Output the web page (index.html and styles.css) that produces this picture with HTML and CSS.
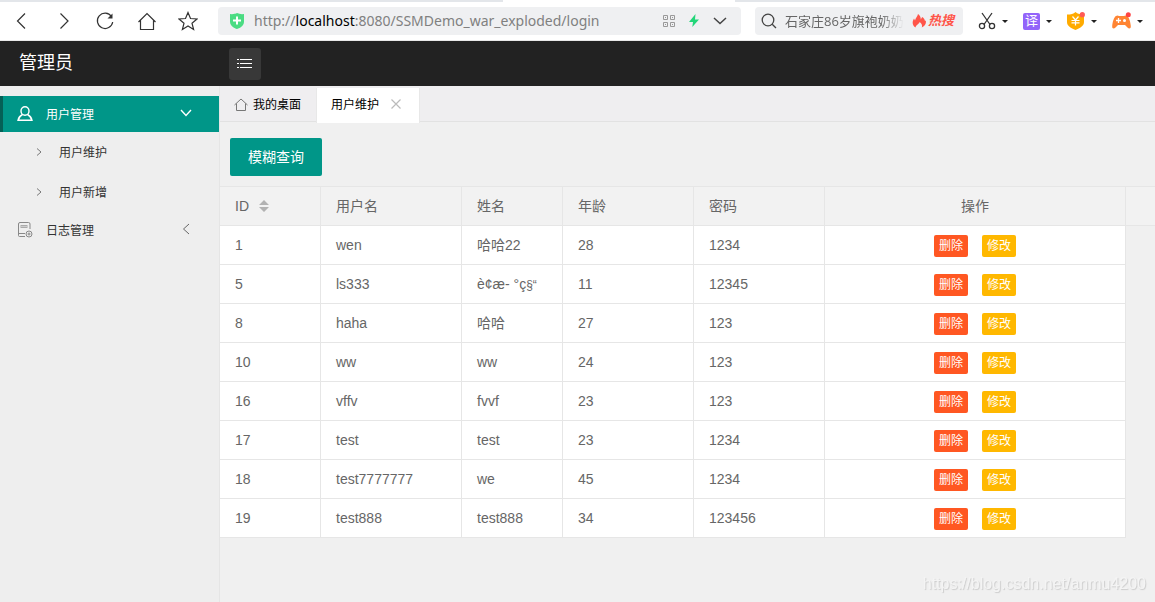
FILE: index.html
```html
<!DOCTYPE html>
<html lang="zh-CN">
<head>
<meta charset="utf-8">
<title>用户维护</title>
<meta name="viewport" content="width=device-width, initial-scale=1">
<link rel="stylesheet" href="styles.css">
</head>
<body>
<div class="strip"><span class="strip-tab"></span><span class="strip-gap"></span><span class="strip-rest"></span></div>
<div class="toolbar">
  <div class="nav">
    <button class="tool" aria-label="后退"><svg width="20" height="20" viewBox="0 0 20 20"><path d="M13 2.500 5.500 10l7.500 7.500"/></svg></button>
    <button class="tool" aria-label="前进"><svg width="20" height="20" viewBox="0 0 20 20"><path d="M6.500 2.500 14 10l-7.500 7.500"/></svg></button>
    <button class="tool" aria-label="刷新"><svg width="20" height="20" viewBox="0 0 20 20"><path d="M16.500 5.500A7.700 7.700 0 1 0 17.700 11"/><path d="M17.500 2.500v5h-5z" fill="#333" stroke="none"/></svg></button>
    <button class="tool" aria-label="主页"><svg width="20" height="20" viewBox="0 0 20 20"><path d="M1.500 11 10 2.500l8.500 8.500M3.500 9.500v9h13v-9"/></svg></button>
    <button class="tool" aria-label="收藏"><svg width="20" height="20" viewBox="0 0 20 20"><path d="m10 1.500 2.500 6 6.500.500-5 4.200 1.600 6.300L10 15l-5.600 3.500L6 12.200 1 8l6.500-.500z"/></svg></button>
  </div>
  <div class="address">
    <svg class="shield" width="14" height="16" viewBox="0 0 14 16"><path d="M0 1q4 .5 7-1 3 1.500 7 1v8q0 4.500-7 7-7-2.500-7-7z" fill="#4bdc83"/><path d="M7 3.500v8M3 7.500h8" stroke="#fff" stroke-width="2"/></svg>
    <div class="url" role="textbox" contenteditable="true" spellcheck="false" aria-label="地址">http://<span class="host">localhost</span>:8080/SSMDemo_war_exploded/login</div>
    <button class="mini" aria-label="二维码"><svg width="12" height="12" viewBox="0 0 12 12" fill="none" stroke="#999"><path d="M.5.5h4v4h-4zM7.500.5h4v4h-4zM.5 7.500h4v4h-4zM7.500 7.500h4v4h-4zM2 2.500h1M9 2.500h1M2 9.500h1M9 9.500h1"/></svg></button>
    <button class="mini" aria-label="极速模式"><svg width="10" height="14" viewBox="0 0 10 14"><path d="M6.500 0 0 8h4l-.700 5L10 5.500H6z" fill="#22d679"/></svg></button>
    <button class="mini" aria-label="展开"><svg width="14" height="8" viewBox="0 0 14 8" fill="none" stroke="#444" stroke-width="1.500"><path d="m1 1 6 5.500L13 1"/></svg></button>
  </div>
  <div class="search">
    <svg width="16" height="16" viewBox="0 0 16 16" fill="none" stroke="#444" stroke-width="1.300"><circle cx="7" cy="7" r="5.800"/><path d="m11.200 11.200 3.800 3.800"/></svg>
    <input class="search-input" type="text" aria-label="搜索" value="石家庄86岁旗袍奶奶">
    <a class="hot" href="#"><svg width="14" height="14" viewBox="0 0 14 14"><path d="M3.500 13.500C-.5 11 .5 7 2 4.500l1 2C3.500 4 5.500 2.500 6 0c2 1.500 3 3.500 2.700 5.500l1.500-2.500c1.500 1 2.500 2 2.800 4l.7-.5c1 3-1 6-4 7 1-2-.2-4.500-2.200-5.500C7.500 10 4 10.500 3.500 13.500z" fill="#ff5549"/></svg><span>热搜</span></a>
  </div>
  <div class="extras">
    <button class="extra" aria-label="截图"><svg width="18" height="18" viewBox="0 0 18 18" fill="none" stroke="#333" stroke-width="1.300"><path d="m4 1 8 11.500M14 1 6 12.500"/><circle cx="4" cy="14" r="2.600"/><circle cx="14" cy="14" r="2.600"/></svg><i class="caret"></i></button>
    <button class="extra" aria-label="翻译"><span class="translate">译</span><i class="caret"></i></button>
    <button class="extra" aria-label="优惠"><svg width="18" height="18" viewBox="0 0 18 18"><path d="M8.500 0c2 2 5 2.500 8.500 2.500V10c0 4-4 6-8.500 8C4 16 0 14 0 10V2.500C4 2.500 6.500 2 8.500 0z" fill="#ffab00"/><path d="m5.500 4.500 3 3.500 3-3.500M4.500 8.500h8M4.500 10.800h8M8.500 8v5.500" fill="none" stroke="#fff" stroke-width="1.200"/><circle cx="15.300" cy="2.700" r="2.600" fill="#ff5a55"/></svg><i class="caret"></i></button>
    <button class="extra" aria-label="游戏"><svg width="19" height="18" viewBox="0 0 19 18"><path d="M4 4q1.500-1 3 0h5q1.500-1 3 0c2 1 3.500 6 3.800 10 .2 3-2 3-3.300 1.500L13 13H6l-2.500 2.500C2 17 0 17 .2 14 .5 10 2 5 4 4z" fill="#ff8534"/><path d="M6.500 6v5M4 8.500h5" stroke="#fff" stroke-width="1.300"/><circle cx="12.500" cy="8.500" r="1.500" fill="#fff"/><circle cx="16.300" cy="2.700" r="2.500" fill="#f44"/></svg><i class="caret"></i></button>
  </div>
</div>
<header class="header">
  <h1 class="brand">管理员</h1>
  <button class="collapse" aria-label="折叠菜单"><svg width="16" height="9" viewBox="0 0 16 9"><path d="M3 .5h12M3 4.500h12M3 8.500h12M0 .5h2M0 4.500h2M0 8.500h2" stroke="#fff"/></svg></button>
</header>
<div class="layout">
  <nav class="side">
    <a class="menu active" href="#"><svg width="16" height="16" viewBox="0 0 16 16" fill="none" stroke="#fff" stroke-width="1.400"><ellipse cx="8" cy="5" rx="4" ry="4.300"/><path d="M5.500 8.500C2.500 10 1.500 12 1 14.300h14c-.5-2.300-1.500-4.300-4.500-5.800"/></svg><span class="menu-text">用户管理</span><svg width="12" height="10" viewBox="0 0 12 10" fill="none" stroke="#fff" stroke-width="1.400"><path d="m1 1 5 5.500L11 1"/></svg></a>
    <a class="sub" href="#"><svg width="6" height="8" viewBox="0 0 6 8" fill="none" stroke="#777"><path d="m1 .5 4 3.500-4 3.500"/></svg><span class="sub-text">用户维护</span></a>
    <a class="sub" href="#"><svg width="6" height="8" viewBox="0 0 6 8" fill="none" stroke="#777"><path d="m1 .5 4 3.500-4 3.500"/></svg><span class="sub-text">用户新增</span></a>
    <a class="menu" href="#"><svg width="16" height="16" viewBox="0 0 16 16" fill="none" stroke="#888"><path d="M3 3h8v3H3z" fill="#ccc" stroke="none"/><path d="M8 14.500H2.500q-1 0-1-1V2q0-1.500 1.500-1.500h8.500q1.500 0 1.500 1.500v5M1.500 11.500H8"/><path d="M4 3.500h6M4 5.500h6" stroke="#aaa"/><circle cx="12" cy="12" r="3"/><circle cx="12" cy="12" r="1"/></svg><span class="menu-text">日志管理</span><svg width="12" height="14" viewBox="0 0 12 14" fill="none" stroke="#666"><path d="M9 1 3.500 6 9 11"/></svg></a>
  </nav>
  <main class="main">
    <div class="tabs">
      <a class="tab home" href="#"><svg width="14" height="13" viewBox="0 0 14 13" fill="none" stroke="#777"><path d="m.5 7 6.500-6 6.500 6M2.500 5.500v7h9v-7"/></svg><span class="tab-text">我的桌面</span></a>
      <div class="tab current"><span class="tab-text">用户维护</span><button class="close" aria-label="关闭"><svg width="10" height="10" viewBox="0 0 10 10" stroke="#bbb" stroke-width="1.200"><path d="m.5.5 9 9M9.500.5l-9 9"/></svg></button></div>
    </div>
    <div class="actions"><button class="query">模糊查询</button></div>
    <table class="grid">
      <colgroup><col class="c-id"><col class="c-user"><col class="c-name"><col class="c-age"><col class="c-pass"><col class="c-ops"><col></colgroup>
      <thead><tr><th>ID<svg class="sort" width="10" height="12" viewBox="0 0 10 12" fill="#b2b2b2"><path d="M0 5h10L5 0zM0 7h10l-5 5z"/></svg></th><th>用户名</th><th>姓名</th><th>年龄</th><th>密码</th><th class="ops">操作</th><th class="filler"></th></tr></thead>
      <tbody>
        <tr><td>1</td><td>wen</td><td>哈哈22</td><td>28</td><td>1234</td><td class="ops"><button class="btn del">删除</button><button class="btn edit">修改</button></td></tr>
        <tr><td>5</td><td>ls333</td><td class="garbled">è¢æ- °ç<small>§“</small></td><td>11</td><td>12345</td><td class="ops"><button class="btn del">删除</button><button class="btn edit">修改</button></td></tr>
        <tr><td>8</td><td>haha</td><td>哈哈</td><td>27</td><td>123</td><td class="ops"><button class="btn del">删除</button><button class="btn edit">修改</button></td></tr>
        <tr><td>10</td><td>ww</td><td>ww</td><td>24</td><td>123</td><td class="ops"><button class="btn del">删除</button><button class="btn edit">修改</button></td></tr>
        <tr><td>16</td><td>vffv</td><td>fvvf</td><td>23</td><td>123</td><td class="ops"><button class="btn del">删除</button><button class="btn edit">修改</button></td></tr>
        <tr><td>17</td><td>test</td><td>test</td><td>23</td><td>1234</td><td class="ops"><button class="btn del">删除</button><button class="btn edit">修改</button></td></tr>
        <tr><td>18</td><td>test7777777</td><td>we</td><td>45</td><td>1234</td><td class="ops"><button class="btn del">删除</button><button class="btn edit">修改</button></td></tr>
        <tr><td>19</td><td>test888</td><td>test888</td><td>34</td><td>123456</td><td class="ops"><button class="btn del">删除</button><button class="btn edit">修改</button></td></tr>
      </tbody>
    </table>
  </main>
</div>
<div class="watermark">https://blog.csdn.net/anmu4200</div>
</body>
</html>
```
FILE: styles.css
```css
* { box-sizing: border-box; }
body {
  margin: 0;
  min-height: 100vh;
  display: flex;
  flex-direction: column;
  background: #f0f0f0;
  font-family: "Liberation Sans", "Noto Sans CJK SC", sans-serif;
  font-size: 14px;
  color: #666;
}
button { border: 0; padding: 0; margin: 0; background: none; font: inherit; color: inherit; cursor: pointer; }
a { color: inherit; text-decoration: none; }
svg { display: block; flex: none; }

/* browser chrome */
.strip { display: flex; height: 2px; background: #fff; }
.strip-tab { flex: 503; background: #e3e6ea; }
.strip-gap { flex: 232; }
.strip-rest { flex: 420; background: #e3e6ea; }
.toolbar {
  display: flex;
  align-items: center;
  height: 39px;
  padding: 0 12px;
  background: #fff;
  border-bottom: 1px solid #e8e8e8;
}
.nav { display: flex; justify-content: space-between; width: 186px; margin-right: 20px; flex: none; }
.tool svg { fill: none; stroke: #333; stroke-width: 1.2; }
.address, .search {
  display: flex;
  align-items: center;
  height: 28px;
  border-radius: 4px;
  background: #eff0f2;
}
.address { flex: 1; min-width: 0; padding: 0 14px 0 12px; gap: 14px; }
.url {
  flex: 1;
  min-width: 0;
  margin-left: -4px;
  overflow: hidden;
  white-space: nowrap;
  font-family: "Noto Sans", sans-serif;
  font-size: 14px;
  line-height: 24px;
  color: #808080;
  outline: 0;
}
.host { color: #000; }
.search { width: 208px; flex: none; margin-left: 14px; padding: 0 9px 0 6px; gap: 8px; }
.search-input {
  flex: 1;
  min-width: 0;
  padding: 0 0 2px;
  border: 0;
  outline: 0;
  background: none;
  font-family: "Open Sans", "Noto Sans CJK SC", sans-serif;
  font-size: 13px;
  color: #666;
  -webkit-mask-image: linear-gradient(90deg, #000 80%, transparent);
  mask-image: linear-gradient(90deg, #000 80%, transparent);
}
.hot {
  display: flex;
  align-items: center;
  gap: 2px;
  font-size: 13px;
  font-weight: 700;
  font-style: italic;
  line-height: 20px;
  color: #ff5549;
}
.extras { display: flex; gap: 15px; width: 165px; flex: none; margin-left: 15px; }
.extra { display: flex; align-items: center; gap: 6px; height: 20px; }
.caret { border: 3px solid transparent; border-top-color: #222; border-bottom: 0; }
.translate {
  width: 17px;
  height: 17px;
  border-radius: 2px;
  background: #9364fa;
  color: #fff;
  font-size: 13px;
  line-height: 16px;
  text-align: center;
}

/* page header */
.header { display: flex; align-items: center; height: 45px; background: #222; color: #fff; }
.brand { width: 229px; margin: 0; padding-left: 19px; font-size: 18px; font-weight: 400; line-height: 42px; padding-bottom: 2px; }
.collapse {
  display: flex;
  align-items: center;
  justify-content: center;
  width: 32px;
  height: 32px;
  border-radius: 3px;
  background: #383838;
}

.layout { display: flex; flex: 1; }
.side {
  width: 220px;
  flex: none;
  padding-top: 10px;
  border-right: 1px solid #e5e5e5;
  background: #eee;
  color: #333;
  font-size: 12px;
}
.menu { display: flex; align-items: center; gap: 13px; height: 36px; padding: 0 27px 0 17px; }
.menu.active { padding-left: 14px; border-left: 3px solid #056056; background: #009688; color: #fff; }
.menu-text { flex: 1; }
.menu-text, .sub-text, .tab-text { padding-bottom: 2px; }
.sub { display: flex; align-items: center; gap: 17px; height: 40px; padding-left: 36px; }

.main { flex: 1; min-width: 0; }
.tabs { display: flex; height: 36px; padding-top: 2px; background: #efeef0; border-bottom: 1px solid #e2e2e2; }
.tab { display: flex; align-items: center; height: 35px; padding-bottom: 3px; font-size: 12px; color: #000; }
.home { gap: 5px; padding-left: 14px; padding-right: 15px; }
.current { gap: 12px; padding-left: 14px; padding-right: 18px; border: 1px solid #e8e8e8; border-width: 0 1px; background: #fff; }
.actions { padding: 16px 10px 10px; }
.query {
  height: 38px;
  padding: 0 18px 2px;
  border-radius: 2px;
  background: #009688;
  color: #fff;
  font-size: 14px;
}

/* data table */
.grid { width: 100%; table-layout: fixed; border-collapse: separate; border-spacing: 0; border-top: 1px solid #e6e6e6; }
.c-id, .c-name { width: 101px; }
.c-user { width: 141px; }
.c-age, .c-pass { width: 131px; }
.c-ops { width: 301px; }
.grid th, .grid td {
  height: 39px;
  padding: 0 15px;
  border: solid #e6e6e6;
  border-width: 0 1px 1px 0;
  font-weight: 400;
  line-height: 20px;
  text-align: left;
  white-space: nowrap;
}
.grid th { background: #f2f2f2; }
.grid td { background: #fff; }
.grid .filler { padding: 0; border-right: 0; }
.grid .ops { text-align: center; }
.grid td.ops { padding-top: 2px; }
.sort { display: inline-block; margin-left: 10px; vertical-align: -1px; }
.garbled small { font-size: 12px; }
.btn {
  height: 22px;
  padding: 0 5px;
  border-radius: 2px;
  color: #fff;
  font-size: 12px;
  line-height: 22px;
  vertical-align: middle;
}
.del { background: #ff5722; }
.edit { margin-left: 14px; background: #ffb800; }

.watermark {
  position: fixed;
  right: 9px;
  bottom: 8px;
  font-size: 16px;
  line-height: 20px;
  color: #f4f4f4;
  text-shadow: 1px 1px 1px #ccc;
  pointer-events: none;
}
```
